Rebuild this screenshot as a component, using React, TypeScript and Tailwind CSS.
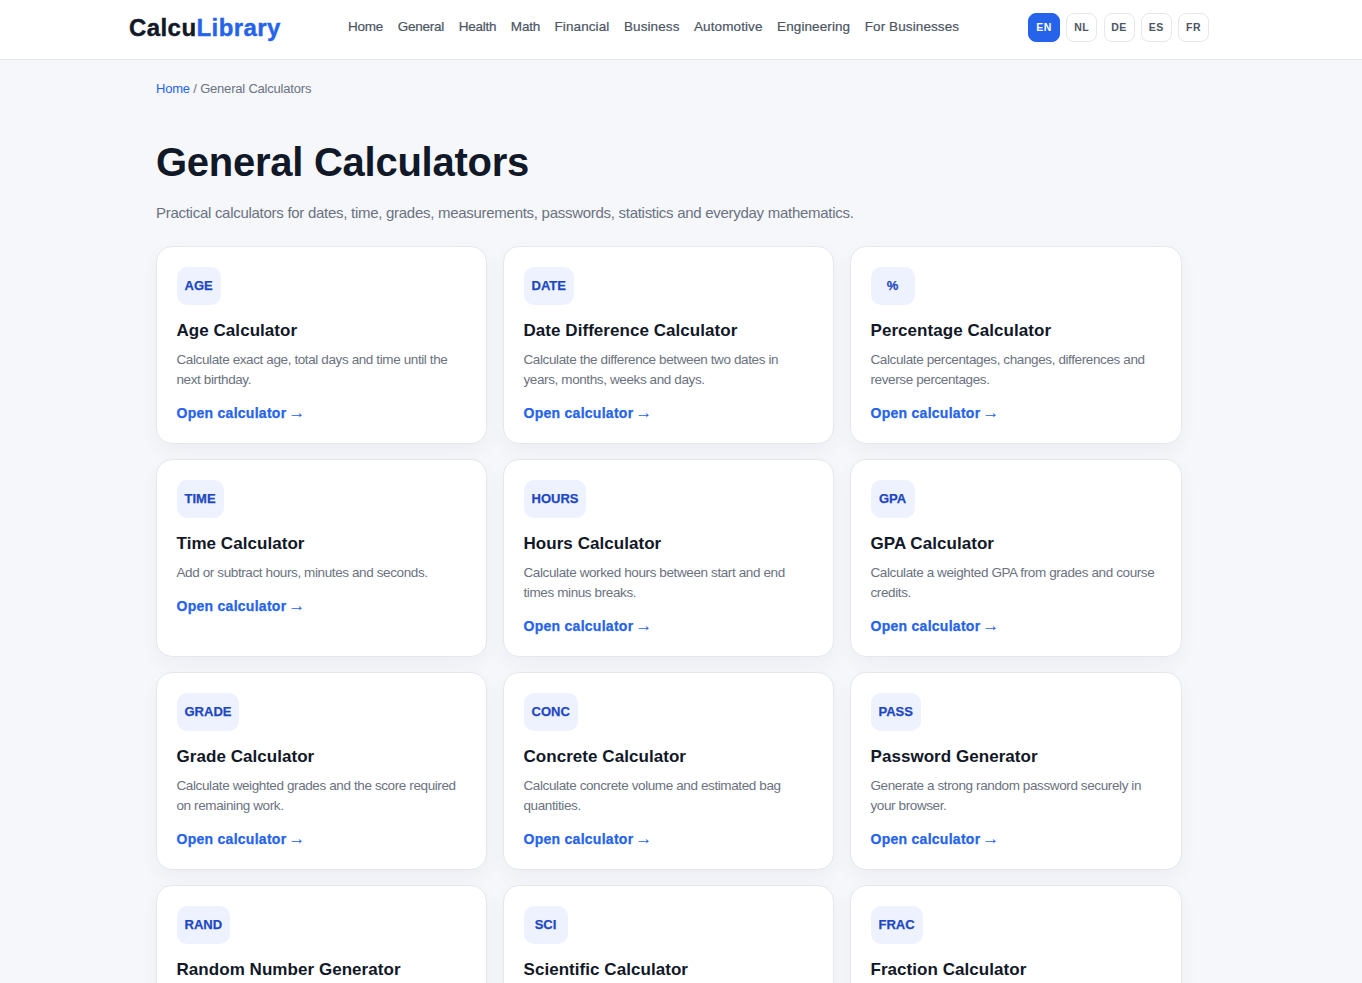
const nav = ["Home","General","Health","Math","Financial","Business","Automotive","Engineering","For Businesses"];
const langs = ["EN","NL","DE","ES","FR"];
const cards = [
  ["AGE","Age Calculator","Calculate exact age, total days and time until the next birthday."],
  ["DATE","Date Difference Calculator","Calculate the difference between two dates in years, months, weeks and days."],
  ["%","Percentage Calculator","Calculate percentages, changes, differences and reverse percentages."],
  ["TIME","Time Calculator","Add or subtract hours, minutes and seconds."],
  ["HOURS","Hours Calculator","Calculate worked hours between start and end times minus breaks."],
  ["GPA","GPA Calculator","Calculate a weighted GPA from grades and course credits."],
  ["GRADE","Grade Calculator","Calculate weighted grades and the score required on remaining work."],
  ["CONC","Concrete Calculator","Calculate concrete volume and estimated bag quantities."],
  ["PASS","Password Generator","Generate a strong random password securely in your browser."],
  ["RAND","Random Number Generator","Generate random numbers within a chosen range."],
  ["SCI","Scientific Calculator","Perform advanced mathematical calculations."],
  ["FRAC","Fraction Calculator","Add, subtract, multiply and divide fractions."],
];

export default function App() {
  return (
    <div className="h-[983px] overflow-hidden bg-[#f5f7fb] font-['Liberation_Sans',Arial,sans-serif]">
      <header className="h-[60px] bg-white border-b border-[#e5e7eb]">
        <div className="w-[1338px] h-full flex items-center justify-center pb-[4px]">
          <div className="w-[1080px] flex items-center">
            <div className="w-[219px] text-[24px] font-bold text-[#111827] tracking-[0.42px] [-webkit-text-stroke:0.4px]">Calcu<span className="text-[#2563eb]">Library</span></div>
            <nav className="flex gap-[14.5px] text-[13.5px] text-[#4b5563] [-webkit-text-stroke:0.2px]">
              {nav.map((n,i) => <span key={n} className={i<4 ? "tracking-[-0.22px]" : "tracking-[0.1px]"}>{n}</span>)}
            </nav>
            <div className="ml-auto flex gap-[6.25px]">
              {langs.map((l,i) => (
                <span key={l} className={i===0
                  ? "h-[29px] w-[32px] justify-center flex items-center rounded-[8px] bg-[#2563eb] text-white border border-[#2563eb] text-[10.5px] font-bold tracking-[0.4px]"
                  : "h-[29px] w-[31px] justify-center flex items-center rounded-[8px] bg-white text-[#4b5563] border border-[#e5e7eb] text-[10.5px] font-bold tracking-[0.4px]"}>{l}</span>
              ))}
            </div>
          </div>
        </div>
      </header>
      <main className="w-[1026px] ml-[156px]">
        <div className="pt-[21px] text-[13px] leading-[16px] tracking-[-0.2px] text-[#6b7280]"><span className="text-[#2563eb]">Home</span> / General Calculators</div>
        <h1 className="mt-[41px] text-[40px] leading-[48px] font-bold tracking-[-0.26px] text-[#111827]">General Calculators</h1>
        <p className="mt-[15px] text-[15px] leading-[24px] tracking-[-0.28px] text-[#6b7280]">Practical calculators for dates, time, grades, measurements, passwords, statistics and everyday mathematics.</p>
        <div className="mt-[21px] grid grid-cols-[331px_331px_332px] gap-x-[16px] gap-y-[15px]">
          {cards.map(([b,t,d]) => (
            <div key={t} className="h-[198px] bg-white border border-[#e5e7eb] rounded-[16px] p-[19.5px] shadow-[0_8px_20px_rgba(17,24,39,0.04)] flex flex-col items-start">
              <span className="h-[38px] min-w-[44px] px-[8px] pb-[0.5px] flex items-center justify-center rounded-[10px] bg-[#eef2ff] text-[#1d47c2] text-[13px] font-bold [-webkit-text-stroke:0.25px]">{b}</span>
              <h2 className="mt-[15px] text-[17px] leading-[22px] font-bold tracking-[0.05px] text-[#111827]">{t}</h2>
              <p className="mt-[8px] text-[13.5px] leading-[20px] tracking-[-0.39px] text-[#6b7280]">{d}</p>
              <span className="mt-[15px] flex items-center h-[18px] text-[14px] font-bold tracking-[0.27px] text-[#2563eb] [-webkit-text-stroke:0.25px]">Open calculator<span className="ml-[2px] -mt-[2px] text-[17px] font-normal [-webkit-text-stroke:0px]">→</span></span>
            </div>
          ))}
        </div>
      </main>
    </div>
  );
}
